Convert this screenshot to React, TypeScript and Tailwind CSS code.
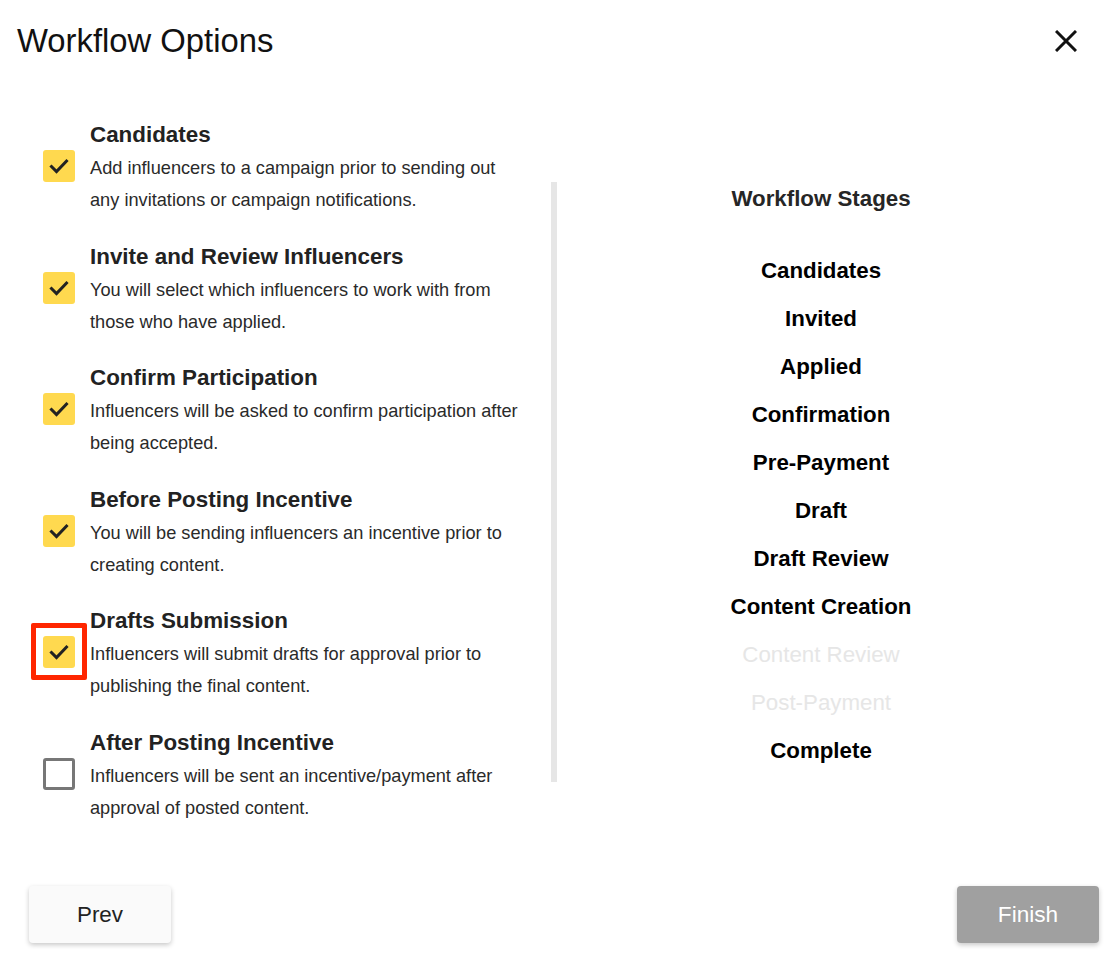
import React from "react";

type Item = { title: string; lines: string[]; checked: boolean; highlight?: boolean };

const items: Item[] = [
  { title: "Candidates", lines: ["Add influencers to a campaign prior to sending out", "any invitations or campaign notifications."], checked: true },
  { title: "Invite and Review Influencers", lines: ["You will select which influencers to work with from", "those who have applied."], checked: true },
  { title: "Confirm Participation", lines: ["Influencers will be asked to confirm participation after", "being accepted."], checked: true },
  { title: "Before Posting Incentive", lines: ["You will be sending influencers an incentive prior to", "creating content."], checked: true },
  { title: "Drafts Submission", lines: ["Influencers will submit drafts for approval prior to", "publishing the final content."], checked: true, highlight: true },
  { title: "After Posting Incentive", lines: ["Influencers will be sent an incentive/payment after", "approval of posted content."], checked: false },
];

const stages: { name: string; active: boolean }[] = [
  { name: "Candidates", active: true },
  { name: "Invited", active: true },
  { name: "Applied", active: true },
  { name: "Confirmation", active: true },
  { name: "Pre-Payment", active: true },
  { name: "Draft", active: true },
  { name: "Draft Review", active: true },
  { name: "Content Creation", active: true },
  { name: "Content Review", active: false },
  { name: "Post-Payment", active: false },
  { name: "Complete", active: true },
];

function Checkbox({ checked, highlight }: { checked: boolean; highlight?: boolean }) {
  return (
    <div className="relative w-[32px] h-[32px] shrink-0">
      {checked ? (
        <div className="w-[32px] h-[32px] rounded-[3px] bg-[#ffd94f] flex items-center justify-center">
          <svg width="32" height="32" viewBox="0 0 32 32" fill="none">
            <path d="M8.5 16.5 L13.5 21.5 L23.5 11" stroke="#222222" strokeWidth="3" strokeLinecap="square" strokeLinejoin="miter" />
          </svg>
        </div>
      ) : (
        <div className="w-[32px] h-[32px] rounded-[3px] border-[3px] border-[#777777] bg-white" />
      )}
      {highlight && (
        <div className="absolute left-[-12px] top-[-13px] w-[56px] h-[57px] border-[5px] border-[#ff2600] rounded-[2px]" />
      )}
    </div>
  );
}

export default function App() {
  return (
    <div
      className="w-[1104px] h-[956px] bg-white flex flex-col text-[#222222]"
      style={{ fontFamily: '"Liberation Sans", Arial, Helvetica, sans-serif' }}
    >
      <div className="h-[82px] flex items-center justify-between pl-[17px] pr-[27px] shrink-0">
        <h1 className="text-[32.8px] leading-[40px] text-[#111111] font-normal">Workflow Options</h1>
        <svg width="22" height="22" viewBox="0 0 22 22">
          <path d="M1 1 L21 21 M21 1 L1 21" stroke="#111111" strokeWidth="3" />
        </svg>
      </div>

      <div className="flex flex-row pt-[40px] flex-1">
        <div className="w-[551px] shrink-0 flex flex-col gap-[27.6px]">
          {items.map((it) => (
            <div key={it.title} className="flex flex-row">
              <div className="ml-[43px] mt-[28px]">
                <Checkbox checked={it.checked} highlight={it.highlight} />
              </div>
              <div className="ml-[15px]">
                <div className="text-[22.4px] leading-[26px] font-bold text-[#222222] whitespace-nowrap">{it.title}</div>
                <div className="mt-[4px] text-[18.2px] leading-[32px] text-[#2a2a2a] whitespace-nowrap">
                  {it.lines.map((l, i) => (
                    <div key={i}>{l}</div>
                  ))}
                </div>
              </div>
            </div>
          ))}
        </div>

        <div className="w-[6px] h-[600px] mt-[60px] bg-[#e6e6e6] shrink-0" />

        <div className="flex-1 pr-[19px] flex flex-col items-center">
          <div className="mt-[64px] text-[22.3px] leading-[26px] font-bold text-[#262626]">Workflow Stages</div>
          <div className="mt-[35px] flex flex-col items-center">
            {stages.map((s) => (
              <div
                key={s.name}
                className={
                  s.active
                    ? "h-[48px] leading-[48px] text-[22.3px] font-bold text-[#000000]"
                    : "h-[48px] leading-[48px] text-[22.3px] font-normal text-[#e6e6e6]"
                }
              >
                {s.name}
              </div>
            ))}
          </div>
        </div>
      </div>

      <div className="flex flex-row justify-between pl-[29px] pr-[5px] pb-[13px] shrink-0">
        <button className="w-[142px] h-[57px] rounded-[4px] bg-[#fafafa] shadow-[0_2px_5px_rgba(0,0,0,0.22)] text-[22.4px] text-[#222222]">
          Prev
        </button>
        <button className="w-[142px] h-[57px] rounded-[4px] bg-[#a0a0a0] shadow-[0_2px_5px_rgba(0,0,0,0.22)] text-[22.6px] text-white">
          Finish
        </button>
      </div>
    </div>
  );
}
